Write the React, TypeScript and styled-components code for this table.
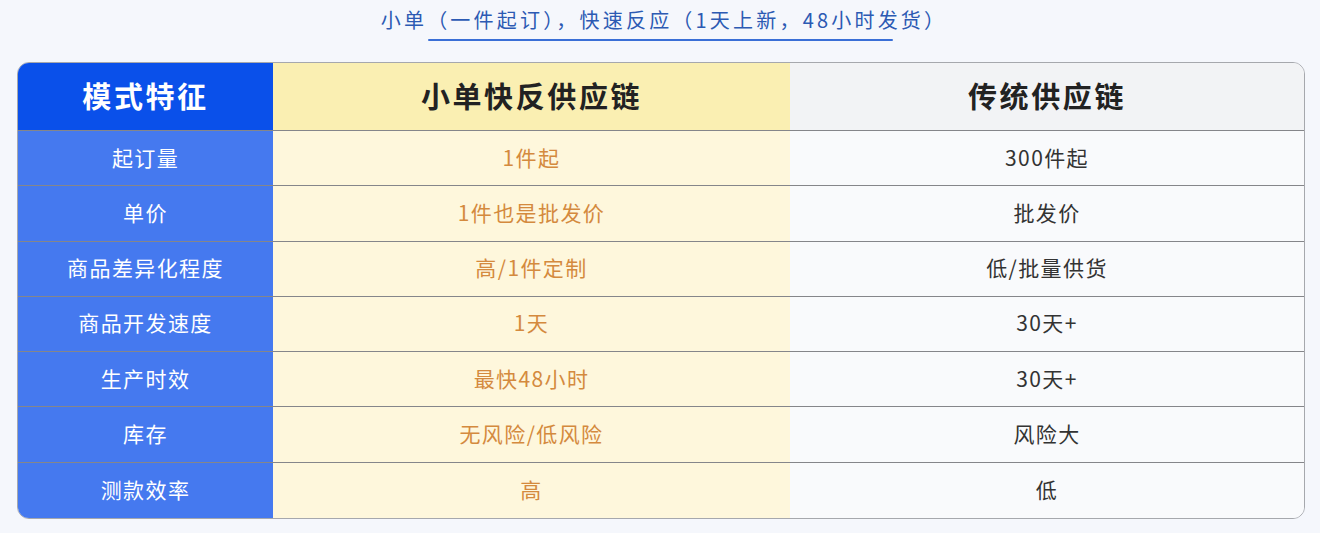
import styled, { createGlobalStyle } from 'styled-components';

const GlobalStyle = createGlobalStyle`
  html, body {
    margin: 0;
    padding: 0;
    background: #f5f7fc;
  }
  body {
    font-family: "Noto Sans CJK SC", "Noto Sans", sans-serif;
  }
`;

const Page = styled.div`
  width: 1320px;
  height: 533px;
  box-sizing: border-box;
  padding: 5px 15px 0 17px;
  display: flex;
  flex-direction: column;
  align-items: stretch;
`;

const Caption = styled.div`
  display: flex;
  justify-content: center;
  height: 57px;
`;

const CaptionText = styled.div`
  position: relative;
  font-size: 20px;
  letter-spacing: 3.2px;
  line-height: 28px;
  color: #2c5ab3;
  padding: 1px 0 0 6px;

  &::after {
    content: '';
    position: absolute;
    left: 53px;
    right: 54px;
    top: 34px;
    height: 2px;
    border-radius: 1px;
    background: #3a6fd6;
  }
`;

const Table = styled.div`
  display: grid;
  grid-template-columns: 255px 517px 1fr;
  grid-template-rows: 68px repeat(7, 1fr);
  height: 455px;
  border: 1px solid #a6a8ad;
  border-radius: 12px;
  overflow: hidden;
`;

type Kind = 'key' | 'quick' | 'old';

const headBg: Record<Kind, string> = {
  key: '#0a50ea',
  quick: '#faefb2',
  old: '#f2f3f5',
};

const bodyBg: Record<Kind, string> = {
  key: '#4579ef',
  quick: '#fef7dc',
  old: '#f9fafc',
};

const bodyColor: Record<Kind, string> = {
  key: '#ffffff',
  quick: '#d48a3e',
  old: '#333333',
};

const HeadCell = styled.div<{ $kind: Kind }>`
  display: flex;
  align-items: center;
  justify-content: center;
  padding-bottom: 3px;
  background: ${p => headBg[p.$kind]};
  color: ${p => (p.$kind === 'key' ? '#ffffff' : '#222222')};
  font-size: 29px;
  font-weight: 700;
  letter-spacing: 2.6px;
  border-bottom: 1px solid #85868a;
`;

const Cell = styled.div<{ $kind: Kind; $last: boolean }>`
  display: flex;
  align-items: center;
  justify-content: center;
  padding-bottom: 3px;
  background: ${p => bodyBg[p.$kind]};
  color: ${p => bodyColor[p.$kind]};
  font-size: 21px;
  letter-spacing: 1.4px;
  border-bottom: ${p => (p.$last ? 'none' : '1px solid #85868a')};
`;

const rows: [string, string, string][] = [
  ['起订量', '1件起', '300件起'],
  ['单价', '1件也是批发价', '批发价'],
  ['商品差异化程度', '高/1件定制', '低/批量供货'],
  ['商品开发速度', '1天', '30天+'],
  ['生产时效', '最快48小时', '30天+'],
  ['库存', '无风险/低风险', '风险大'],
  ['测款效率', '高', '低'],
];

const kinds: Kind[] = ['key', 'quick', 'old'];

export default function App() {
  return (
    <>
      <GlobalStyle />
      <Page>
        <Caption>
          <CaptionText>小单（一件起订），快速反应（1天上新，48小时发货）</CaptionText>
        </Caption>
        <Table>
          <HeadCell $kind="key">模式特征</HeadCell>
          <HeadCell $kind="quick">小单快反供应链</HeadCell>
          <HeadCell $kind="old">传统供应链</HeadCell>
          {rows.map((row, i) =>
            row.map((text, j) => (
              <Cell key={`${i}-${j}`} $kind={kinds[j]} $last={i === rows.length - 1}>
                {text}
              </Cell>
            )),
          )}
        </Table>
      </Page>
    </>
  );
}
